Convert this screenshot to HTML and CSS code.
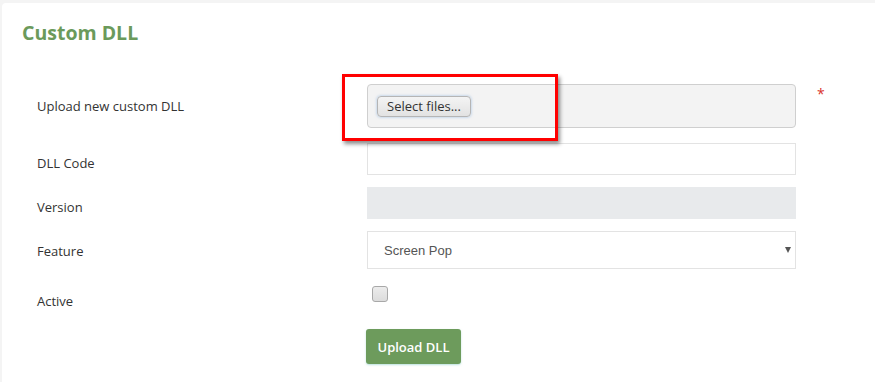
FILE: index.html
```html
<!DOCTYPE html>
<html lang="en">
<head>
  <meta charset="UTF-8">
  <meta name="viewport" content="width=device-width, initial-scale=1.0">
  <title>Custom DLL</title>
  <link rel="stylesheet" href="styles.css">
</head>
<body>
  <div class="card">
    <h1>Custom DLL</h1>

    <form class="dll-form" onsubmit="return false">
      <div class="row row-file">
        <label class="label-center">Upload new custom DLL</label>
        <div class="upload-box">
          <button type="button" class="select-btn">Select files...</button>
          <div class="highlight"></div>
        </div>
        <span class="required">*</span>
      </div>

      <div class="row">
        <label for="dll-code">DLL Code</label>
        <input type="text" id="dll-code" class="field">
      </div>

      <div class="row">
        <label for="version">Version</label>
        <input type="text" id="version" class="field field-disabled" disabled>
      </div>

      <div class="row row-select">
        <label for="feature">Feature</label>
        <div class="select-wrap">
          <select id="feature" class="field select">
            <option>Screen Pop</option>
          </select>
        </div>
      </div>

      <div class="row row-check">
        <label for="active">Active</label>
        <span class="checkbox" id="active"></span>
      </div>

      <div class="row row-actions">
        <span></span>
        <div><button type="submit" class="btn">Upload DLL</button></div>
      </div>
    </form>
  </div>
</body>
</html>
```

FILE: styles.css
```css
body {
  margin: 0;
  padding: 3px 0 0 2px;
  background-color: #f4f4f4;
  font-family: 'Open Sans', sans-serif;
  color: #333;
  font-size: 13px;
}
.card {
  background-color: white;
  border-radius: 4px 0 0 0;
  padding: 17px 20px 18px 20px;
}
h1 {
  margin: 0;
  font-size: 19.5px;
  line-height: 26px;
  font-weight: 700;
  color: #6b9a5b;
}
.dll-form {
  margin-top: 38px;
  padding-left: 15px;
}
.row {
  display: grid;
  grid-template-columns: 330px 429px 1fr;
  align-items: center;
  margin-bottom: 12px;
}
.row label {
  line-height: 20px;
  padding-top: 8px;
}
.row .label-center {
  padding-top: 0;
}
.row-file {
  margin-bottom: 15px;
}
.upload-box {
  position: relative;
  height: 42px;
  background-color: #f3f3f3;
  border: 1px solid #cfcfcf;
  border-radius: 4px;
  display: flex;
  align-items: center;
  padding-left: 9px;
}
.select-btn {
  font-family: 'Open Sans', sans-serif;
  font-size: 13px;
  color: #333;
  height: 21px;
  padding: 0 9px;
  line-height: 19px;
  background: linear-gradient(#f4f4f4, #e2e2e2);
  border: 1px solid #b5b5b5;
  border-radius: 4px;
  box-shadow: 0 0 3px rgba(110, 160, 220, 0.6);
}
.highlight {
  position: absolute;
  left: -26px;
  top: -11px;
  width: 210px;
  height: 61px;
  border: 3px solid #f00;
  box-shadow: 2px 3px 4px rgba(0, 0, 0, 0.45);
  pointer-events: none;
}
.required {
  align-self: start;
  margin: 0 0 0 21px;
  color: #d9342b;
  font-size: 14px;
  line-height: 20px;
}
.field {
  box-sizing: border-box;
  height: 32px;
  width: 100%;
  border: 1px solid #e3e3e3;
  background-color: white;
  margin: 0;
  font-family: 'Liberation Sans', Arial, sans-serif;
}
.field-disabled {
  background-color: #e8eaec;
  border-color: #e8eaec;
}
.row-select label {
  padding-top: 2px;
}
.select-wrap {
  position: relative;
}
.select {
  height: 38px;
  appearance: none;
  -webkit-appearance: none;
  border-radius: 0;
  padding-left: 16px;
  font-size: 13px;
  color: #555;
}
.select-wrap::after {
  content: '';
  position: absolute;
  right: 5px;
  top: 16px;
  border-left: 3px solid transparent;
  border-right: 3px solid transparent;
  border-top: 6px solid #555;
}
.row-check {
  align-items: start;
  margin-bottom: 0;
}
.row-check label {
  padding-top: 10px;
}
.checkbox {
  box-sizing: border-box;
  display: block;
  width: 16px;
  height: 16px;
  margin: 5px 0 0 5px;
  background: linear-gradient(#ececec, #dcdcdc);
  border: 1px solid #a8a8a8;
  border-radius: 3px;
}
.row-actions {
  margin-top: 18px;
  margin-bottom: 0;
}
.btn {
  font-family: 'Open Sans', sans-serif;
  background-color: #6d9b5c;
  color: white;
  border: none;
  height: 35px;
  width: 95px;
  margin-left: -1px;
  border-radius: 3px;
  font-size: 13px;
  font-weight: 600;
  box-shadow: 0 1px 2px rgba(120, 200, 190, 0.5);
  cursor: pointer;
}
```
